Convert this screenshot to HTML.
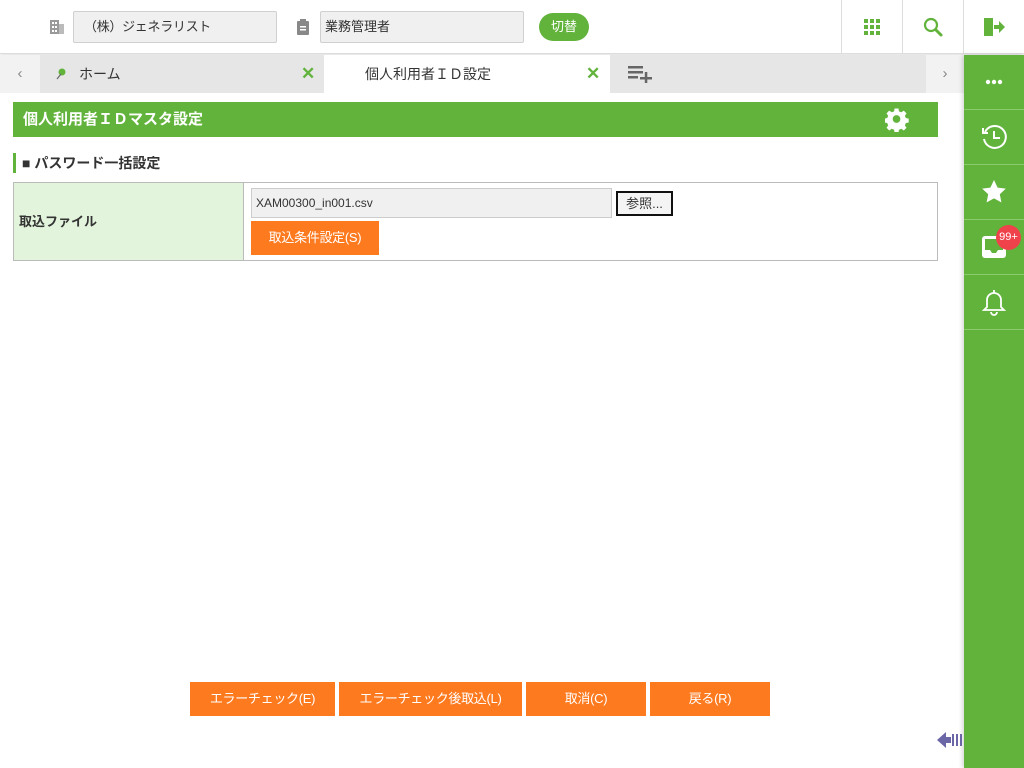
<!DOCTYPE html>
<html><head><meta charset="utf-8"><style>
*{box-sizing:border-box;margin:0;padding:0}
body{width:1024px;height:768px;position:relative;overflow:hidden;background:#fff;font-family:"Liberation Sans","Noto Sans CJK JP",sans-serif;font-size:13px;color:#333}
.a{position:absolute}
.inp{background:#f0f0f0;border:1px solid #d0d0d0;border-radius:2px;font-size:13px;padding-left:10px;line-height:30px}
.sep{width:1px;background:#ddd}
.btn{background:#fd7a1f;color:#fff;text-align:center;font-size:13px;line-height:33px;letter-spacing:-0.3px}
.sb{left:964px;width:60px;height:55px;border-bottom:1px solid #8ccb6c;display:flex;align-items:center;justify-content:center}
</style></head><body>
<div class="a" style="left:0;top:0;width:1024px;height:54px;border-bottom:1px solid #ddd;box-shadow:0 1px 3px rgba(0,0,0,.15)"></div>
<svg class="a" style="left:49px;top:19px" width="16" height="16"><rect x="1" y="1" width="9" height="14" fill="#999"/><rect x="10" y="5" width="5" height="10" fill="#bbb"/><g fill="#fff"><rect x="3" y="3" width="2" height="2"/><rect x="6" y="3" width="2" height="2"/><rect x="3" y="7" width="2" height="2"/><rect x="6" y="7" width="2" height="2"/><rect x="3" y="11" width="2" height="2"/><rect x="6" y="11" width="2" height="2"/></g></svg>
<div class="a inp" style="left:73px;top:11px;width:204px;height:32px;letter-spacing:-0.3px">（株）ジェネラリスト</div>
<svg class="a" style="left:296px;top:19px" width="14" height="16"><rect x="1" y="2" width="12" height="14" rx="1" fill="#888"/><rect x="4" y="0" width="6" height="4" fill="#888"/><rect x="4" y="7" width="6" height="1.5" fill="#fff"/><rect x="4" y="10" width="6" height="1.5" fill="#fff"/></svg>
<div class="a inp" style="left:320px;top:11px;width:204px;height:32px;padding-left:4px">業務管理者</div>
<div class="a" style="left:539px;top:13px;width:50px;height:28px;border-radius:14px;background:#62b33c;color:#fff;text-align:center;line-height:28px;font-size:13px">切替</div>
<div class="a sep" style="left:841px;top:0;height:54px"></div>
<div class="a sep" style="left:902px;top:0;height:54px"></div>
<div class="a sep" style="left:963px;top:0;height:54px"></div>
<svg class="a" style="left:864px;top:19px" width="16" height="16" fill="#62b33c"><rect x="0" y="0" width="4" height="4"/><rect x="6" y="0" width="4" height="4"/><rect x="12" y="0" width="4" height="4"/><rect x="0" y="6" width="4" height="4"/><rect x="6" y="6" width="4" height="4"/><rect x="12" y="6" width="4" height="4"/><rect x="0" y="12" width="4" height="4"/><rect x="6" y="12" width="4" height="4"/><rect x="12" y="12" width="4" height="4"/></svg>
<svg class="a" style="left:923px;top:17px" width="20" height="20"><circle cx="8" cy="8" r="6" fill="none" stroke="#62b33c" stroke-width="2.2"/><line x1="12.5" y1="12.5" x2="18" y2="18" stroke="#62b33c" stroke-width="3" stroke-linecap="round"/></svg>
<svg class="a" style="left:983px;top:16px" width="22" height="22" fill="#62b33c"><path d="M1 2h9v4H6v10h4v4H1z"/><path d="M3 2l7 2v16l-7-2z"/><path d="M11 9h5V5l6 6-6 6v-4h-5z"/></svg>
<div class="a" style="left:0;top:55px;width:964px;height:38px;background:#e6e6e6"></div>
<div class="a" style="left:0;top:55px;width:40px;height:38px;background:#f2f2f2;color:#888;text-align:center;line-height:38px;font-size:15px">‹</div>
<div class="a" style="left:926px;top:55px;width:38px;height:38px;background:#f2f2f2;color:#888;text-align:center;line-height:38px;font-size:15px">›</div>
<svg class="a" style="left:56px;top:68px" width="10" height="12"><circle cx="6" cy="4" r="3.5" fill="#62b33c"/><line x1="5" y1="6" x2="1" y2="11" stroke="#666" stroke-width="1.2"/></svg>
<div class="a" style="left:79px;top:55px;line-height:38px;font-size:14px">ホーム</div>
<div class="a" style="left:301px;top:55px;line-height:38px;font-size:17px;font-weight:bold;color:#62b33c">✕</div>
<div class="a" style="left:324px;top:55px;width:286px;height:38px;background:#fff"></div>
<div class="a" style="left:365px;top:55px;line-height:38px;font-size:14px">個人利用者ＩＤ設定</div>
<div class="a" style="left:586px;top:55px;line-height:38px;font-size:17px;font-weight:bold;color:#62b33c">✕</div>
<svg class="a" style="left:628px;top:65px" width="24" height="18" fill="#666"><rect x="0" y="1" width="15" height="2.5"/><rect x="0" y="6" width="15" height="2.5"/><rect x="0" y="11" width="10" height="2.5"/><rect x="12" y="12" width="12" height="2.5"/><rect x="16.8" y="7" width="2.5" height="12"/></svg>
<div class="a" style="left:964px;top:55px;width:60px;height:713px;background:#62b33c;box-shadow:-2px 0 4px rgba(0,0,0,.15)"></div>
<div class="a sb" style="top:55px"><svg width="18" height="6" fill="#fff"><circle cx="3" cy="3" r="2.2"/><circle cx="9" cy="3" r="2.2"/><circle cx="15" cy="3" r="2.2"/></svg></div>
<div class="a sb" style="top:110px"><svg width="28" height="28" fill="none" stroke="#fff" stroke-width="2"><path d="M5 9a11 11 0 1 1-1 7"/><path d="M3 5v5h5" /><path d="M14 8v7h6"/></svg></div>
<div class="a sb" style="top:165px"><svg width="26" height="26" fill="#fff"><path d="M13 1l3.6 7.6 8.2 1-6 5.6 1.6 8.2L13 19.4 5.6 23.4l1.6-8.2-6-5.6 8.2-1z"/></svg></div>
<div class="a sb" style="top:220px"><svg width="26" height="26"><rect x="1" y="2" width="24" height="22" rx="3" fill="#fff"/><path d="M4 5h18v11h-5l-2 3h-4l-2-3H4z" fill="#62b33c"/></svg></div>
<div class="a" style="left:996px;top:225px;width:25px;height:25px;border-radius:50%;background:#f0424b;color:#fff;font-size:11px;text-align:center;line-height:25px">99+</div>
<div class="a sb" style="top:275px"><svg width="26" height="28" fill="none" stroke="#fff" stroke-width="1.8"><path d="M13 2v3M6 19V12a7 7 0 0 1 14 0v7l3 3H3z"/><path d="M10 24a3 3 0 0 0 6 0"/></svg></div>
<div class="a" style="left:13px;top:102px;width:925px;height:35px;background:#62b33c;color:#fff;font-weight:bold;font-size:15px;line-height:35px;padding-left:10px">個人利用者ＩＤマスタ設定</div>
<svg class="a" style="left:885px;top:108px" width="24" height="24" viewBox="0 0 24 24" fill="#fff"><path d="M10 1h4l.6 3 2.4 1 2.6-1.7 2.8 2.8L20.7 8.7l1 2.3 3 .6v4l-3 .6-1 2.4 1.7 2.5-2.8 2.8-2.6-1.7-2.4 1-.6 3h-4l-.6-3-2.4-1-2.6 1.7-2.8-2.8 1.7-2.5-1-2.4-3-.6v-4l3-.6 1-2.3-1.7-2.6L4.4 3.3 7 5l2.4-1zM12 8a4 4 0 1 0 0 8 4 4 0 0 0 0-8z" transform="translate(0 -0.5) scale(.96)"/></svg>
<div class="a" style="left:13px;top:153px;width:3px;height:20px;background:#62b33c"></div>
<div class="a" style="left:22px;top:152px;line-height:22px;font-size:14px;font-weight:bold;color:#333">■ パスワード一括設定</div>
<div class="a" style="left:13px;top:182px;width:925px;height:79px;border:1px solid #bbb"></div>
<div class="a" style="left:14px;top:183px;width:230px;height:77px;background:#e2f4dc;border-right:1px solid #bbb;font-weight:bold;line-height:77px;padding-left:5px">取込ファイル</div>
<div class="a" style="left:251px;top:188px;width:361px;height:30px;background:#f0f0f0;border:1px solid #ccc;line-height:28px;padding-left:4px;font-size:12px">XAM00300_in001.csv</div>
<div class="a" style="left:616px;top:191px;width:57px;height:25px;border:2px solid #111;background:#f4f4f4;text-align:center;line-height:21px;font-size:13px">参照...</div>
<div class="a btn" style="left:251px;top:221px;width:128px;height:34px;line-height:34px">取込条件設定(S)</div>
<div class="a btn" style="left:190px;top:682px;width:145px;height:34px">エラーチェック(E)</div>
<div class="a btn" style="left:339px;top:682px;width:183px;height:34px">エラーチェック後取込(L)</div>
<div class="a btn" style="left:526px;top:682px;width:120px;height:34px">取消(C)</div>
<div class="a btn" style="left:650px;top:682px;width:120px;height:34px">戻る(R)</div>
<svg class="a" style="left:936px;top:730px" width="28" height="20"><path d="M1 10l9-8v5h5v6h-5v5z" fill="#6b66a6"/><rect x="16" y="4" width="2" height="12" fill="#6b66a6"/><rect x="20" y="4" width="2" height="12" fill="#6b66a6"/><rect x="24" y="4" width="2" height="12" fill="#6b66a6"/></svg>
</body></html>
